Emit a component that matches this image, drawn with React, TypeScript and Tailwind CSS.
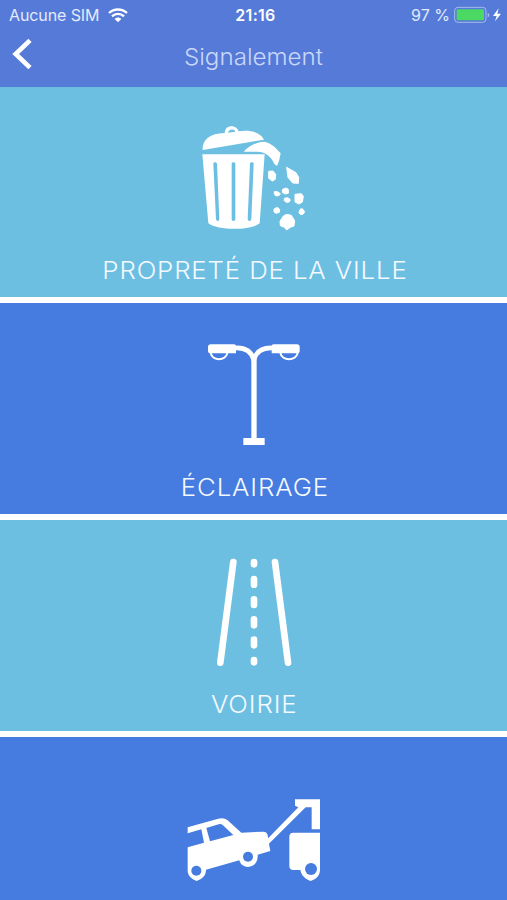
import type { ReactNode } from "react";

function TrashIcon() {
  return (
    <svg width="127" height="125" viewBox="0 0 381 375" fill="#fff">
      <path
        fillRule="evenodd"
        d="M38 105 C36 77 57 55 104 54 C105 40 113 34 124 34 C136 34 143 41 146 49 C180 44 211 51 222 74 Z M114 53 L136 50 C134 41 117 41 114 53 Z"
      />
      <path d="M161 110 C177 94 200 80 222 80 C242 82 260 101 272 115 L267 138 L261 153 L253 147 C244 126 229 114 211 111 C194 109 177 111 161 110 Z" />
      <path
        fillRule="evenodd"
        d="M37 118 L224 118 L209 325 C182 347 83 347 55 325 Z M70 146 L78 312 C79 320 88 319 88 312 L81 146 C80 140 70 140 70 146 Z M125 146 L125 312 C125 320 136 320 136 312 L136 146 C136 140 125 140 125 146 Z M180 146 L173 312 C174 320 183 320 184 312 L191 146 C191 140 180 140 180 146 Z"
      />
      <g stroke="#fff" strokeWidth="3" strokeLinejoin="round">
        <path d="M236 169 L249 168 L257 178 L256 193 L247 198 L236 190 Z" />
        <path d="M290 157 L318 173 L326 187 L325 205 L308 204 L294 187 Z" />
        <path d="M278 223 L288 219 L295 223 L295 235 L285 237 L277 232 Z" />
        <path d="M253 230 L262 230 L271 236 L268 241 L258 243 L253 238 Z" />
        <path d="M283 250 L293 248 L301 254 L298 261 L288 262 L283 257 Z" />
        <path d="M315 238 L334 236 L340 244 L337 261 L327 267 L315 261 Z" />
        <path d="M252 282 L262 277 L269 283 L268 292 L258 295 L252 291 Z" />
        <path d="M330 283 L337 281 L344 290 L340 297 L332 299 L327 293 Z" />
        <path d="M280 303 L290 298 L304 301 L314 317 L312 333 L301 337 L290 345 L283 337 L271 332 L270 319 Z" />
      </g>
    </svg>
  );
}

function LampIcon() {
  return (
    <svg width="127" height="120" viewBox="0 0 381 360" fill="none">
      <path
        d="M134 39 C165 37 184 49 191 74 C199 49 218 37 249 39"
        stroke="#fff"
        strokeWidth="14"
      />
      <path
        d="M62 28 L132 28 Q138 28 138 34 V55 H62 Q54 55 54 48 V36 Q54 28 62 28 Z M321 28 L251 28 Q245 28 245 34 V55 H321 Q329 55 329 48 V36 Q329 28 321 28 Z"
        fill="#fff"
      />
      <path
        d="M62 54 C67 79 107 79 112 54 M271 54 C276 79 318 79 323 54"
        stroke="#fff"
        strokeWidth="6"
      />
      <path d="M184 65 H200 V309 H224 V330 H160 V309 H184 Z" fill="#fff" />
    </svg>
  );
}

function RoadIcon() {
  return (
    <svg
      width="107"
      height="125"
      viewBox="0 0 321 375"
      stroke="#fff"
      strokeWidth="20"
      strokeLinecap="round"
    >
      <path d="M100 36 L61 338 M225 36 L264 338" />
      <path d="M162 36 V43 M162 87 V104 M162 148 V165 M162 208 V226 M162 269 V286 M162 330 V337" />
    </svg>
  );
}

function TowIcon() {
  return (
    <svg width="147" height="110" viewBox="0 0 441 330" fill="#fff">
      <path
        fillRule="evenodd"
        d="M23 112 L112 87 Q131 81 143 91 L184 128 L248 125 Q260 124 263 135 L266 156 L271 183 L233 194 C236 239 184 240 178 211 L78 239 C78 260 63 267 50 273 C37 268 22 259 23 239 V172 L72 158 L64 118 L23 130 Z M79 114 L90 154 L160 135 L128 105 Q123 101 116 103 Z"
      />
      <path d="M260 149 L355 52 L345 47 V28 H420 V118 H395 V52 H377 L266 162 Z" />
      <path d="M340 128 H420 V239 C420 259 406 267 392 273 C376 267 364 257 361 240 H340 Q328 240 328 228 V140 Q328 128 340 128 Z" />
      <g fill="#467bdf">
        <circle cx="49" cy="242" r="15" />
        <circle cx="204" cy="200" r="15" />
        <circle cx="393" cy="237" r="18" />
      </g>
    </svg>
  );
}

function StatusBar() {
  return (
    <div className="grid h-[30px] grid-cols-3 items-center pr-[5px] pl-[9px] text-[16px] leading-none text-[#e3eafb]">
      <div className="flex items-center gap-[9px] whitespace-nowrap">
        <span className="w-[90px] tracking-[-0.1px]">Aucune SIM</span>
        <svg width="20" height="15" viewBox="0 0 60 45" fill="none" stroke="#fff" strokeWidth="7">
          <path d="M3 15 C18 1 42 1 57 15 M12 25 C22 15 38 15 48 25" />
          <path d="M20 33 C26 27 34 27 40 33 L30 43 Z" fill="#fff" stroke="none" />
        </svg>
      </div>
      <span className="text-center font-semibold tracking-[0.3px] text-white">21:16</span>
      <div className="flex items-center justify-end whitespace-nowrap">
        <span className="mr-[4px]">97 %</span>
        <svg width="48" height="18" viewBox="0 0 144 54">
          <rect x="2" y="4" width="94" height="45" rx="10" fill="none" stroke="#a5bced" strokeWidth="3" />
          <rect x="8" y="10" width="82" height="33" rx="4" fill="#4bd964" />
          <path d="M101 20 Q106 22 106 27 Q106 32 101 34 Z" fill="#a5bced" />
          <path d="M134 7 L117 30 H128 L123 46 L141 23 H130 Z" fill="#fff" />
        </svg>
      </div>
    </div>
  );
}

type TileProps = {
  className: string;
  label?: string;
  children: ReactNode;
};

function Tile({ className, label, children }: TileProps) {
  return (
    <button className={`flex w-full shrink-0 flex-col items-center ${className}`}>
      {children}
      {label && (
        <span className="ml-[2px] scale-x-[1.075] text-[24px] leading-8 font-light tracking-[0.8px] whitespace-nowrap text-[#f3f9ff]">
          {label}
        </span>
      )}
    </button>
  );
}

function App() {
  return (
    <div className="flex h-[900px] w-[507px] flex-col overflow-hidden bg-white font-['Inter','Liberation_Sans',sans-serif] text-white">
      <header className="h-[87px] shrink-0 bg-[#557ad7]">
        <StatusBar />
        <div className="grid h-[52px] grid-cols-[60px_1fr_60px] items-center">
          <svg className="mb-1 ml-[11px]" width="21" height="32" viewBox="0 0 63 96" fill="none" stroke="#fff" strokeWidth="14">
            <path d="M57 7 L14 48 L57 89" />
          </svg>
          <h1 className="mt-[2px] scale-x-[1.05] text-center text-[23px] font-light text-[#c9d7f8]">
            Signalement
          </h1>
        </div>
      </header>

      <main className="flex flex-col gap-[6px]">
        <Tile className="h-[210px] gap-[15px] bg-[#6dbfe2] pt-7" label="PROPRETÉ DE LA VILLE">
          <TrashIcon />
        </Tile>
        <Tile className="h-[211px] gap-[17px] bg-[#467bdf] pt-8" label="ÉCLAIRAGE">
          <LampIcon />
        </Tile>
        <Tile className="h-[211px] gap-[14px] bg-[#6dbfe2] pt-[30px]" label="VOIRIE">
          <RoadIcon />
        </Tile>
        <Tile className="h-[211px] bg-[#467bdf] pt-[53px]">
          <TowIcon />
        </Tile>
      </main>
    </div>
  );
}

export default App;
